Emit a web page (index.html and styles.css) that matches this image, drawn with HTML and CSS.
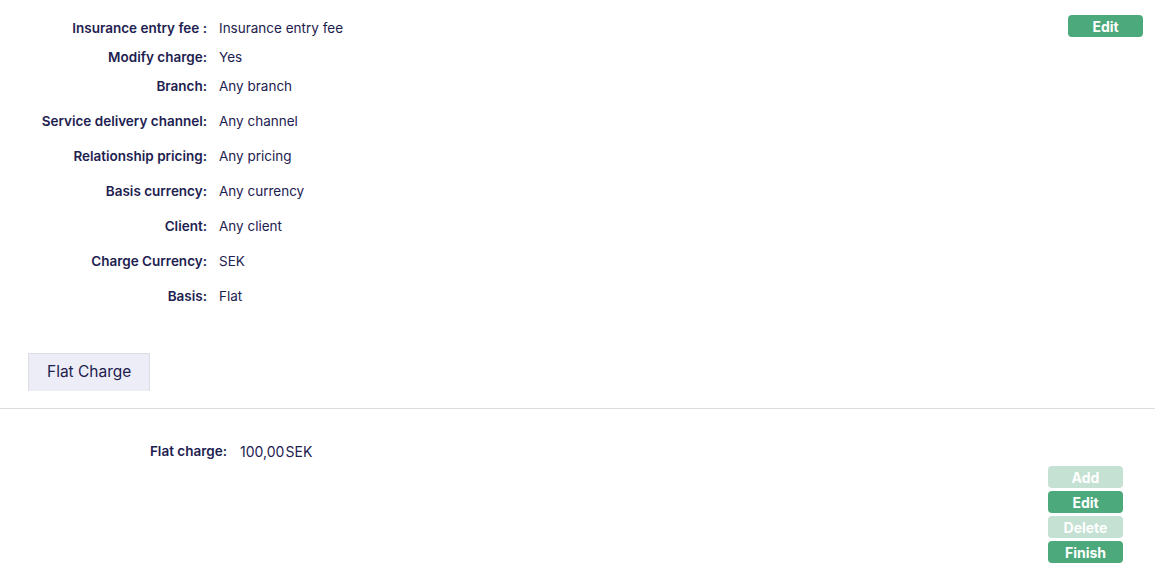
FILE: index.html
```html
<!DOCTYPE html>
<html lang="en">
<head>
  <meta charset="UTF-8" />
  <title>Charge details</title>
  <link rel="stylesheet" href="styles.css">
</head>
<body>
  <div class="summary">
    <dl class="details">
      <div class="row row-tight"><dt>Insurance entry fee :</dt><dd>Insurance entry fee</dd></div>
      <div class="row row-tight"><dt>Modify charge:</dt><dd>Yes</dd></div>
      <div class="row row-tight"><dt>Branch:</dt><dd>Any branch</dd></div>
      <div class="row"><dt>Service delivery channel:</dt><dd>Any channel</dd></div>
      <div class="row"><dt>Relationship pricing:</dt><dd>Any pricing</dd></div>
      <div class="row"><dt>Basis currency:</dt><dd>Any currency</dd></div>
      <div class="row"><dt>Client:</dt><dd>Any client</dd></div>
      <div class="row"><dt>Charge Currency:</dt><dd>SEK</dd></div>
      <div class="row"><dt>Basis:</dt><dd>Flat</dd></div>
    </dl>
    <button type="button" class="btn btn-top">Edit</button>
  </div>

  <div class="tabs">
    <div class="tab">Flat Charge</div>
  </div>

  <div class="panel">
    <dl class="charge">
      <dt>Flat charge:</dt>
      <dd>100,00&#8202;SEK</dd>
    </dl>
    <div class="actions">
      <button type="button" class="btn" disabled>Add</button>
      <button type="button" class="btn">Edit</button>
      <button type="button" class="btn" disabled>Delete</button>
      <button type="button" class="btn">Finish</button>
    </div>
  </div>
</body>
</html>
```

FILE: styles.css
```css
* {
    margin: 0;
    padding: 0;
    box-sizing: border-box;
}
body {
    font-family: 'Inter', 'Liberation Sans', sans-serif;
    font-size: 13.5px;
    color: #1d2150;
    background: #fff;
}
.summary {
    display: flex;
    justify-content: space-between;
    align-items: flex-start;
    padding: 13px 12px 0 0;
}
.row {
    display: flex;
    align-items: center;
    height: 35px;
}
.row-tight {
    height: 29px;
}
.row-tight + .row:not(.row-tight) {
    margin-top: 3px;
}
.details dt {
    width: 207px;
    text-align: right;
    font-weight: 600;
}
.details dd {
    padding-left: 12px;
}
.btn {
    width: 75px;
    height: 22px;
    border: none;
    border-radius: 4px;
    background: #4ca97b;
    color: #fff;
    font-family: inherit;
    font-size: 14px;
    font-weight: 700;
    cursor: pointer;
}
.btn:disabled {
    background: #c4e1d3;
    cursor: default;
}
.btn-top {
    margin-top: 2px;
}
.tabs {
    padding: 40px 0 17px 28px;
    border-bottom: 1px solid #dcdcdc;
}
.tab {
    display: inline-block;
    width: 122px;
    height: 38px;
    line-height: 36px;
    padding-left: 18px;
    background: #ecedf6;
    border: 1px solid #dcdde3;
    border-bottom: none;
    font-size: 15.5px;
}
.panel {
    display: flex;
    justify-content: space-between;
    align-items: flex-start;
    padding: 32px 32px 0 0;
}
.charge {
    display: flex;
    align-items: center;
    height: 20px;
}
.charge dt {
    width: 227px;
    text-align: right;
    font-weight: 600;
}
.charge dd {
    padding-left: 13px;
    font-size: 14px;
}
.actions {
    display: flex;
    flex-direction: column;
    gap: 3px;
    margin-top: 25px;
}
```
